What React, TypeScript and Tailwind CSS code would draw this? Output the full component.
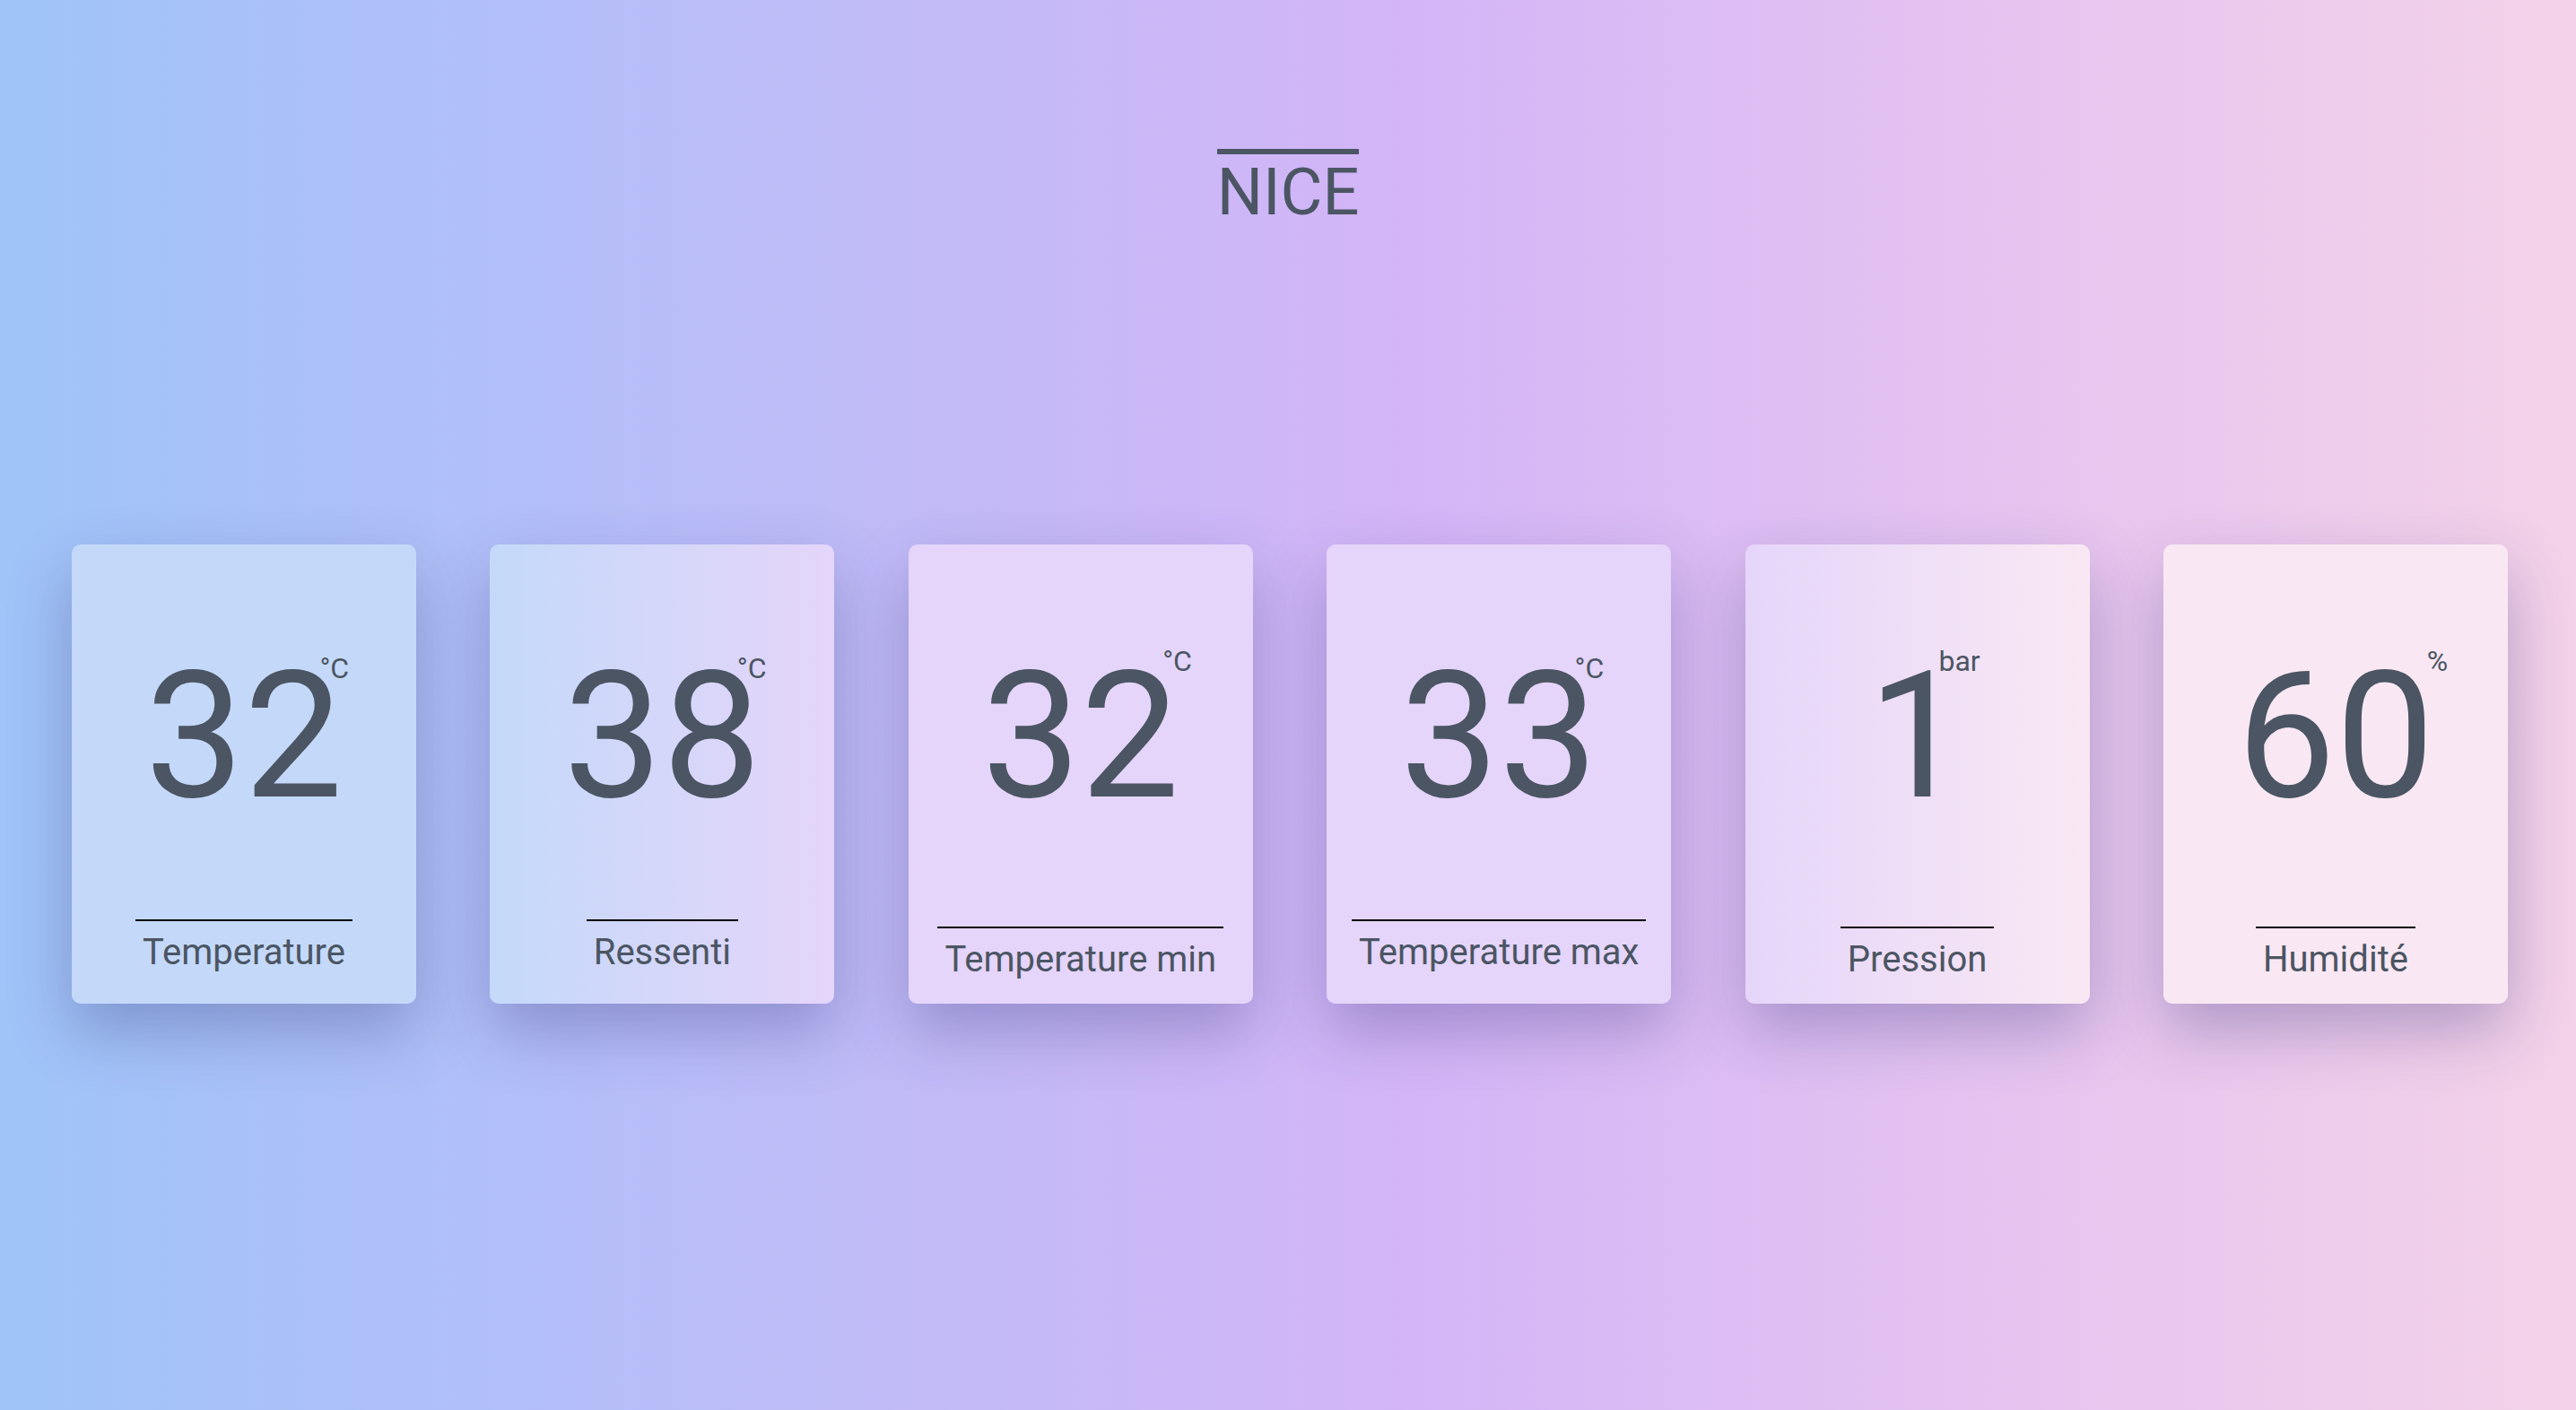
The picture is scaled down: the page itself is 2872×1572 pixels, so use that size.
const cards = [
  { value: "32", unit: "°C", label: "Temperature", unitPos: "top-[6px] right-[-7px]", pad: "pb-[35px]" },
  { value: "38", unit: "°C", label: "Ressenti", unitPos: "top-[6px] right-[-6px]", pad: "pb-[35px]" },
  { value: "32", unit: "°C", label: "Temperature min", unitPos: "top-[-2px] right-[-14px]", pad: "pb-[27px]" },
  { value: "33", unit: "°C", label: "Temperature max", unitPos: "top-[6px] right-[-7px]", pad: "pb-[35px]" },
  { value: "1", unit: "bar", label: "Pression", unitPos: "top-[-2px] right-[-15px]", pad: "pb-[27px]" },
  { value: "60", unit: "%", label: "Humidité", unitPos: "top-[-2px] right-[-15px]", pad: "pb-[27px]" },
]

function WeatherCard({ value, unit, label, unitPos, pad }: (typeof cards)[number]) {
  return (
    <div
      className={`flex h-[512px] w-[384px] flex-col items-center rounded-[10px] bg-[linear-gradient(90deg,#c4d9f9_0%,#c4d9f9_19%,#e5d5fa_32.5%,#e5d5fa_67.5%,#f9e8f3_81%,#f9e8f3_100%)] bg-fixed shadow-[0_30px_70px_rgba(40,40,110,0.3)] ${pad}`}
    >
      {/* Big value with unit */}
      <div className="relative mt-[116px] text-[196px] leading-none">
        {value}
        <span className={`absolute text-[32px] leading-none ${unitPos}`}>{unit}</span>
      </div>

      {/* Label */}
      <div className="mt-auto border-t-2 border-black px-[8px] pt-[13px] text-[40px] leading-[44px]">
        {label}
      </div>
    </div>
  )
}

export default function App() {
  return (
    <div className="min-h-screen w-full bg-[linear-gradient(90deg,#9fc4f8_0%,#d4b5f7_55%,#f4d2e9_100%)] font-[Roboto,sans-serif] text-[#4b5563]">
      <div className="flex justify-center pt-[166px]">
        <h1 className="border-t-[6px] border-[#4b5563] text-[72px] font-normal leading-[86px]">NICE</h1>
      </div>

      <div className="mt-[349px] flex justify-between pl-[80px] pr-[76px]">
        {cards.map((c, i) => (
          <WeatherCard key={i} {...c} />
        ))}
      </div>
    </div>
  )
}
